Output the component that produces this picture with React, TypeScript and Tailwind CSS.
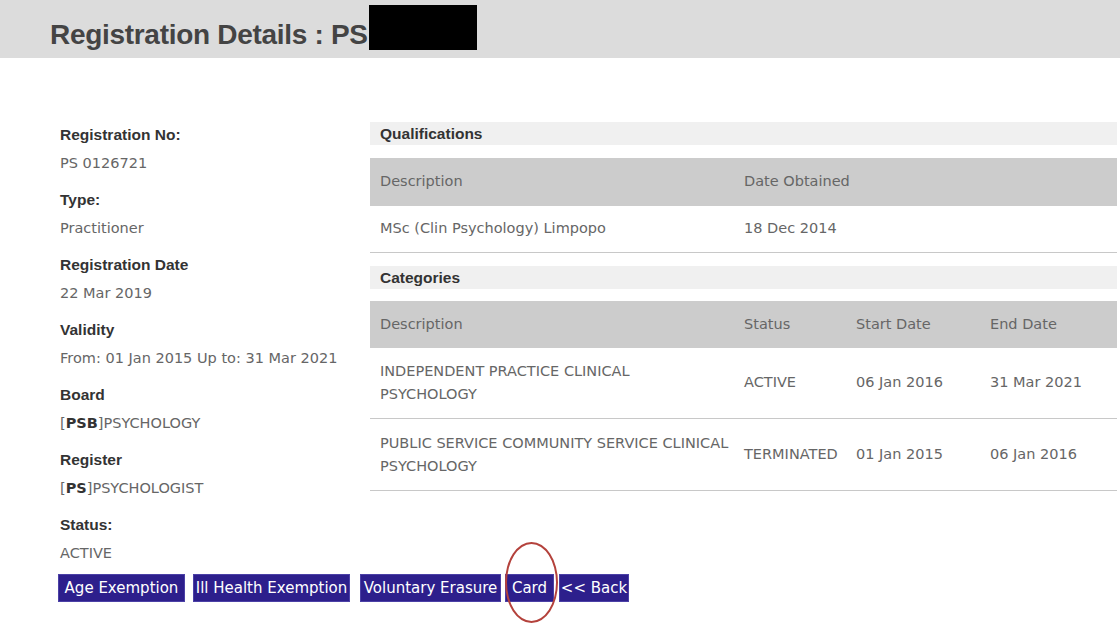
const LEFT_FIELDS: { label: string; value: React.ReactNode }[] = [
  { label: 'Registration No:', value: 'PS 0126721' },
  { label: 'Type:', value: 'Practitioner' },
  { label: 'Registration Date', value: '22 Mar 2019' },
  { label: 'Validity', value: 'From: 01 Jan 2015 Up to: 31 Mar 2021' },
  {
    label: 'Board',
    value: (
      <>
        [<b className="font-bold text-[#333]">PSB</b>]PSYCHOLOGY
      </>
    ),
  },
  {
    label: 'Register',
    value: (
      <>
        [<b className="font-bold text-[#333]">PS</b>]PSYCHOLOGIST
      </>
    ),
  },
  { label: 'Status:', value: 'ACTIVE' },
]

const CATEGORIES = [
  {
    desc: ['INDEPENDENT PRACTICE CLINICAL', 'PSYCHOLOGY'],
    status: 'ACTIVE',
    start: '06 Jan 2016',
    end: '31 Mar 2021',
    h: 'h-[71px]',
  },
  {
    desc: ['PUBLIC SERVICE COMMUNITY SERVICE CLINICAL', 'PSYCHOLOGY'],
    status: 'TERMINATED',
    start: '01 Jan 2015',
    end: '06 Jan 2016',
    h: 'h-[72px]',
  },
]

const BUTTONS = [
  { text: 'Age Exemption', cls: 'w-[127px] mr-[8px]' },
  { text: 'Ill Health Exemption', cls: 'w-[157px] mr-[10px]' },
  { text: 'Voluntary Erasure', cls: 'w-[141px] mr-[4px]' },
  { text: 'Card', cls: 'w-[49px] mr-[5px]', circled: true },
  { text: '<< Back', cls: 'w-[70px]' },
]

const gothic = "font-['DejaVu_Sans',sans-serif]"
const arial = "font-['Liberation_Sans',Arial,sans-serif]"

function SectionBar({ title }: { title: string }) {
  return (
    <div className={`h-[23px] bg-[#f0f0f0] pl-[10px] flex items-center ${arial} font-bold text-[15.5px] text-[#333]`}>
      {title}
    </div>
  )
}

export default function App() {
  return (
    <div className="w-[1120px] h-[639px] bg-white overflow-hidden">
      {/* Title bar */}
      <div className="h-[58px] bg-[#dcdcdc] flex items-start pl-[50px]">
        <h1 className={`mt-[19px] leading-[31px] text-[28px] tracking-[-0.3px] font-bold text-[#444] ${arial}`}>
          Registration Details : PS
        </h1>
        <div className="ml-[1px] mt-[5px] w-[108px] h-[45px] bg-black" />
      </div>

      <div className="flex pt-[62px]">
        {/* Left details */}
        <div className="w-[370px] pl-[60px] shrink-0">
          {LEFT_FIELDS.map(f => (
            <div key={f.label}>
              <div className={`leading-[29px] text-[15.5px] font-bold text-[#333] ${arial}`}>{f.label}</div>
              <div className={`leading-[28px] mb-[8px] text-[14.5px] text-[#666] whitespace-nowrap ${gothic}`}>{f.value}</div>
            </div>
          ))}

          <div className="flex mt-[-1px] -ml-[2px]">
            {BUTTONS.map(b => (
              <div key={b.text} className={`relative ${b.cls} shrink-0`}>
                <button
                  className={`w-full h-[28px] bg-[#2d1f8c] border border-[#4b40a6] text-white text-[15px] whitespace-nowrap flex items-center justify-center ${gothic}`}
                >
                  {b.text}
                </button>
                {b.circled && (
                  <div className="absolute left-0 top-[-32px] w-[53px] h-[81px] rounded-[50%] border-2 border-[#b4423c] pointer-events-none" />
                )}
              </div>
            ))}
          </div>
        </div>

        {/* Right tables */}
        <div className={`w-[747px] mt-[2px] text-[14.5px] text-[#666] ${gothic}`}>
          <SectionBar title="Qualifications" />
          <div className="mt-[13px] h-[48px] bg-[#cccccc] grid grid-cols-[364px_1fr] items-center">
            <div className="pl-[10px]">Description</div>
            <div className="pl-[10px]">Date Obtained</div>
          </div>
          <div className="h-[47px] border-b border-[#c8c8c8] grid grid-cols-[364px_1fr] items-center">
            <div className="pl-[10px]">MSc (Clin Psychology) Limpopo</div>
            <div className="pl-[10px]">18 Dec 2014</div>
          </div>

          <div className="mt-[13px]">
            <SectionBar title="Categories" />
          </div>
          <div className="mt-[12px] h-[47px] bg-[#cccccc] grid grid-cols-[364px_112px_134px_1fr] items-center">
            <div className="pl-[10px]">Description</div>
            <div className="pl-[10px]">Status</div>
            <div className="pl-[10px]">Start Date</div>
            <div className="pl-[10px]">End Date</div>
          </div>
          {CATEGORIES.map(c => (
            <div
              key={c.desc[0]}
              className={`${c.h} border-b border-[#c8c8c8] grid grid-cols-[364px_112px_134px_1fr] items-center`}
            >
              <div className="pl-[10px] leading-[23px] whitespace-nowrap">
                {c.desc[0]}
                <br />
                {c.desc[1]}
              </div>
              <div className="pl-[10px]">{c.status}</div>
              <div className="pl-[10px]">{c.start}</div>
              <div className="pl-[10px]">{c.end}</div>
            </div>
          ))}
        </div>
      </div>
    </div>
  )
}
